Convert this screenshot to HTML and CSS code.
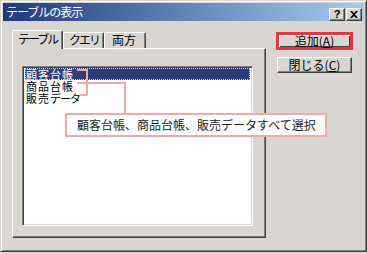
FILE: index.html
```html
<!DOCTYPE html>
<html>
<head>
	<meta charset="utf-8" />
	<title>テーブルの表示</title>
	<link rel="stylesheet" href="styles.css">
</head>
<body>
<div class="window">
	<div class="titlebar">
		<span class="title">テーブルの表示</span>
		<div class="tbtns">
			<span class="tbtn help">?</span>
			<span class="tbtn">
				<svg width="8" height="7" viewBox="0 0 8 7"><path d="M0 0h2l2 2 2-2h2L5 3.5 8 7H6L4 5 2 7H0l3-3.5z" fill="#000"/></svg>
			</span>
		</div>
	</div>
	<div class="main">
		<div class="tabcol">
			<div class="tabrow">
				<span class="tab sel kana">テーブル</span>
				<span class="tab kana">クエリ</span>
				<span class="tab">両方</span>
			</div>
			<div class="panel">
				<ul class="list">
					<li class="item selected">顧客台帳</li>
					<li class="item">商品台帳</li>
					<li class="item">販売<span class="kana1">データ</span></li>
				</ul>
			</div>
		</div>
		<div class="btncol">
			<div class="btn mark"><span>追加(<u>A</u>)</span></div>
			<div class="btn"><span>閉じる(<u>C</u>)</span></div>
		</div>
	</div>
	<!-- annotation -->
	<svg class="leader" width="367" height="252">
		<polyline points="77,70 87,70 87,95 80,95" fill="none" stroke="#f2a9a3" stroke-width="2"/>
		<polyline points="77,83 125,83 125,113" fill="none" stroke="#f2a9a3" stroke-width="2"/>
	</svg>
	<div class="note">顧客台帳、商品台帳、販売データすべて選択</div>
</div>
</body>
</html>
```

FILE: styles.css
```css
body{
	margin: 0;
	padding: 0;
	background-color: #d9d5d1;
	font-family: "Noto Sans CJK JP", "Liberation Sans", sans-serif;
	font-size: 12px;
	color: #000;
}
/* fenetre */
.window{
	position: relative;
	width: 367px;
	height: 252px;
	box-sizing: border-box;
	padding: 2px;
	background-color: #d9d5d1;
	border-left: 1px solid #d9d5d1;
	border-top: 1px solid #d9d5d1;
	border-right: 1px solid #404040;
	border-bottom: 1px solid #404040;
	box-shadow: inset 1px 1px #fff, inset -1px -1px #808080;
}
.titlebar{
	display: flex;
	align-items: flex-start;
	justify-content: space-between;
	height: 18px;
	padding: 0 2px 0 3px;
	background: linear-gradient(to right, #1e3a7b, #a9cbef);
}
.title{
	color: #fff;
	line-height: 18px;
	letter-spacing: -1px;
}
.tbtns{
	display: flex;
	margin-top: 5px;
}
.tbtn{
	display: flex;
	align-items: center;
	justify-content: center;
	width: 16px;
	height: 13px;
	box-sizing: border-box;
	background-color: #d9d5d1;
	border-top: 1px solid #fff;
	border-left: 1px solid #fff;
	border-right: 1px solid #404040;
	border-bottom: 1px solid #404040;
	box-shadow: inset -1px -1px #808080;
	font-family: "Liberation Sans", sans-serif;
	font-weight: bold;
	font-size: 11px;
	line-height: 11px;
}
.tbtn.help{
	margin-right: 1px;
}
/* contenu */
.main{
	display: flex;
	padding: 9px 0 0 9px;
}
.tabcol{
	width: 254px;
}
.tabrow{
	display: flex;
	align-items: flex-end;
	height: 18px;
}
.tab{
	position: relative;
	height: 16px;
	box-sizing: border-box;
	padding: 0 0 0 5px;
	border-top: 1px solid #fff;
	border-left: 1px solid #fff;
	border-right: 1px solid #404040;
	border-radius: 2px 2px 0 0;
	box-shadow: inset -1px 0 #808080;
	line-height: 14px;
	white-space: nowrap;
	overflow: hidden;
}
.tab.sel{
	height: 19px;
	margin-bottom: -1px;
	background-color: #d9d5d1;
	z-index: 1;
	line-height: 16px;
	width: 51px;
}
.tab.kana{
	letter-spacing: -2px;
}
.tab:nth-child(2){
	width: 41px;
}
.tab:nth-child(3){
	width: 42px;
	padding-left: 7px;
}
.panel{
	height: 190px;
	box-sizing: border-box;
	padding: 17px 0 0 9px;
	border-top: 1px solid #fff;
	border-left: 1px solid #fff;
	border-right: 1px solid #404040;
	border-bottom: 1px solid #404040;
	box-shadow: inset -1px -1px #808080;
}
.list{
	list-style: none;
	margin: 0;
	padding: 1px 2px;
	width: 231px;
	height: 160px;
	box-sizing: border-box;
	background-color: #fff;
	border-top: 1px solid #808080;
	border-left: 1px solid #808080;
	border-right: 1px solid #fff;
	border-bottom: 1px solid #fff;
	box-shadow: inset 1px 1px #404040, inset -1px -1px #d9d5d1;
}
.item{
	height: 12px;
	font-size: 11px;
	letter-spacing: 1px;
	line-height: 12px;
	padding-left: 1px;
}
.item.selected{
	background-color: #2e3d75;
	color: #fff;
	outline: 1px dotted #e9dc7a;
	outline-offset: -1px;
}
.kana1{
	letter-spacing: -1px;
}
/* boutons */
.btncol{
	display: flex;
	flex-direction: column;
	margin: 2px 0 0 10px;
}
.btn{
	display: flex;
	align-items: center;
	justify-content: center;
	width: 75px;
	height: 16px;
	box-sizing: border-box;
	margin-left: 1px;
	background-color: #d9d5d1;
	border-top: 1px solid #fff;
	border-left: 1px solid #fff;
	border-right: 1px solid #404040;
	border-bottom: 1px solid #404040;
	box-shadow: inset -1px -1px #808080;
	line-height: 12px;
}
.btn.mark{
	width: 77px;
	height: 18px;
	margin: 0 0 7px 0;
	border: 3px solid #e2353f;
	box-shadow: inset 1px 1px #fff, inset -1px -1px #404040;
}
.btn u{
	text-underline-offset: 1px;
}
/* annotation */
.leader{
	position: absolute;
	left: -1px;
	top: -1px;
}
.note{
	position: absolute;
	left: 64px;
	top: 112px;
	width: 262px;
	height: 24px;
	box-sizing: border-box;
	padding-left: 10px;
	background-color: #fff;
	border: 2px solid #f2a9a3;
	line-height: 20px;
	color: #222;
}
```
